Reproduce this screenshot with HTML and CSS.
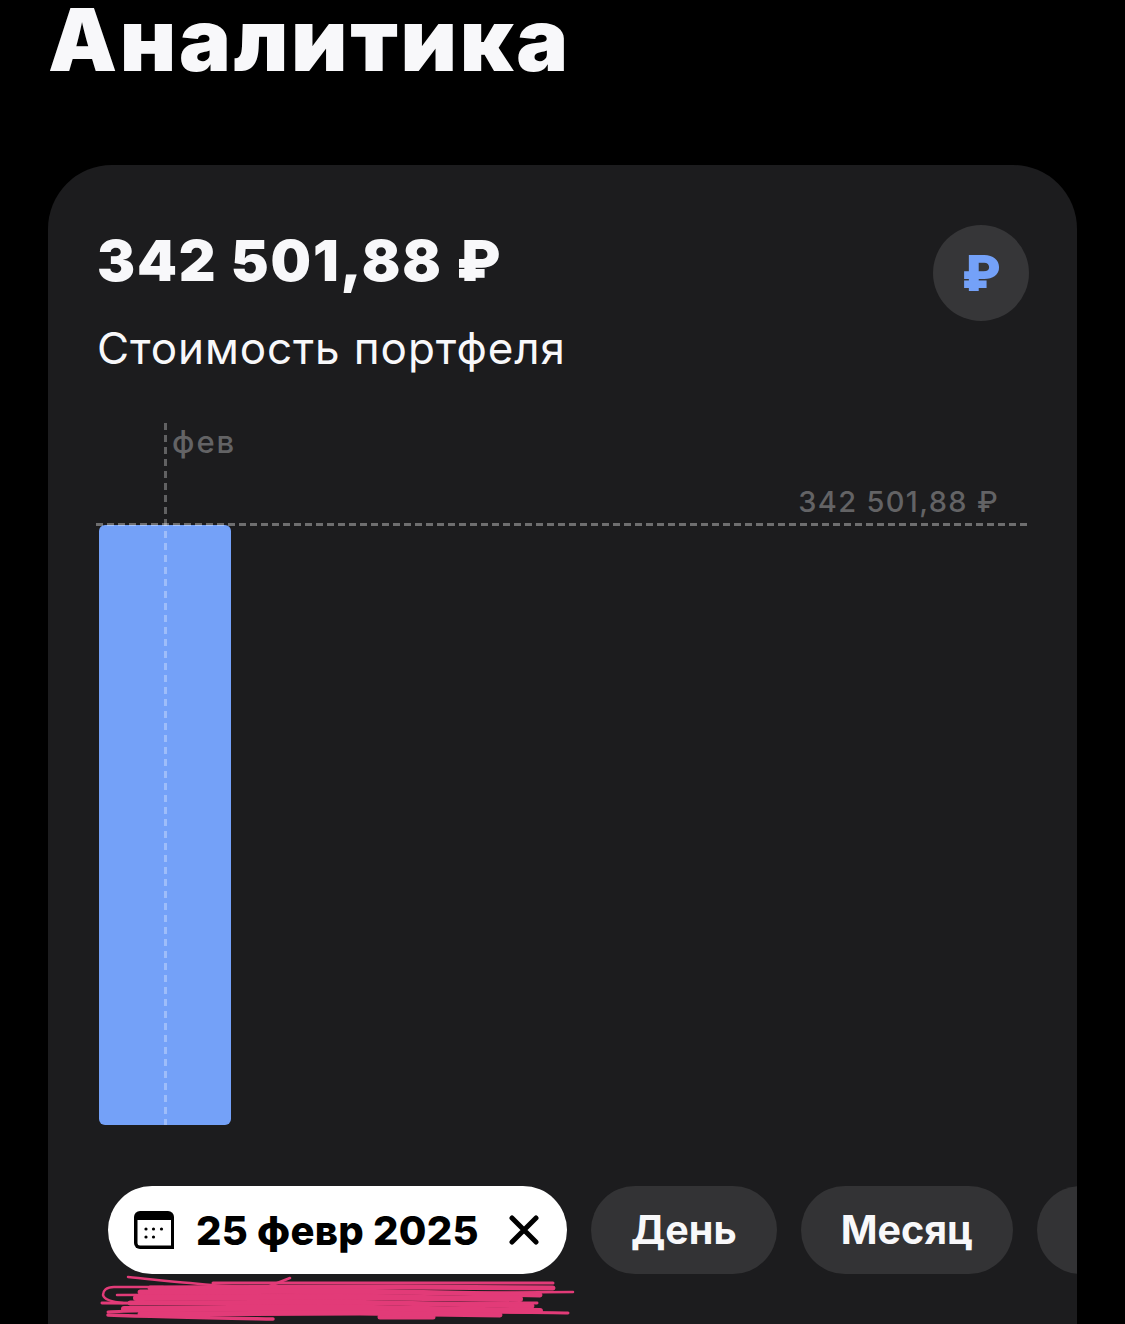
FILE: index.html
```html
<!DOCTYPE html>
<html lang="ru">
	<head>
		<meta charset="utf-8">
		<title>Аналитика</title>
		<link rel="stylesheet" href="styles.css">
	</head>

	<body>
		<h1 class="page-title">Аналитика</h1>

		<section class="card">
			<header class="summary">
				<div>
					<div class="summary-value">342 501,88 ₽</div>
					<div class="summary-label">Стоимость портфеля</div>
				</div>
				<div class="currency-badge">₽</div>
			</header>

			<div class="chart">
				<div class="chart-bar"></div>
				<div class="chart-month-line"></div>
				<span class="chart-month">фев</span>
				<span class="chart-max">342 501,88 ₽</span>
				<div class="chart-max-line"></div>
			</div>

			<div class="filters">
				<button class="chip chip-active">
					<svg class="chip-calendar" viewBox="0 0 40 38" width="40" height="38">
						<path d="M6 0H34a6 6 0 0 1 6 6V38H6a6 6 0 0 1-6-6V6a6 6 0 0 1 6-6Z" fill="#000"/>
						<path d="M3.500 9H37V34.500H6a2.500 2.500 0 0 1-2.500-2.500Z" fill="#fff"/>
						<g fill="#000">
							<circle cx="12" cy="18" r="1.600"/>
							<circle cx="19.500" cy="18" r="1.600"/>
							<circle cx="27.500" cy="18" r="1.600"/>
							<circle cx="12" cy="26" r="1.600"/>
							<circle cx="19.500" cy="26" r="1.600"/>
						</g>
					</svg>
					<span>25 февр 2025</span>
					<svg class="chip-close" viewBox="0 0 30 30" width="30" height="30">
						<path d="M3 3L27 27M27 3L3 27" stroke="#000" stroke-width="5" stroke-linecap="round" fill="none"/>
					</svg>
				</button>
				<button class="chip">День</button>
				<button class="chip">Месяц</button>
				<button class="chip chip-clipped"></button>
			</div>

			<svg class="scribble" viewBox="0 0 480 50" width="480" height="50">
				<g fill="none" stroke="#e23b78" stroke-linecap="round" stroke-linejoin="round">
					<path stroke-width="2.500" d="M28 3C50 5 70 8 90 9C115 12 140 13 167 13L190 4"/>
					<path stroke-width="2.500" d="M63 13H14C6 13 3 17 3 21C4 25 12 28 23 29"/>
					<path stroke-width="2.500" d="M17 21L250 20L473 18"/>
					<path stroke-width="3" d="M2 29L200 30L437 29"/>
					<path stroke-width="3" d="M8 38C60 34 300 37 468 39"/>
					<path stroke-width="3.500" d="M8 41C60 43 120 44 173 45"/>
					<path stroke-width="3" d="M113 9H453"/>
					<path stroke-width="5" d="M280 43H333"/>
					<path stroke-width="5" d="M50 14L300 13L453 14"/>
					<path stroke-width="5" d="M40 18L250 17L440 21"/>
					<path stroke-width="6" d="M36 24L240 23L420 25"/>
					<path stroke-width="5" d="M30 29L240 28L432 32"/>
					<path stroke-width="6" d="M24 35L220 33L440 37"/>
					<path stroke-width="5" d="M40 40L260 39L400 41"/>
				</g>
			</svg>
		</section>
	</body>
</html>
```

FILE: styles.css
```css
* {
	box-sizing: border-box;
}

html, body {
	height: 1324px;
	overflow: hidden;
}

body {
	margin: 0;
	padding-left: 48px;
	background-color: #000;
	color: #f8f8fa;
	font-family: "Inter", "Liberation Sans", sans-serif;
}

.page-title {
	margin: 0;
	height: 165px;
	font-size: 87px;
	font-weight: 900;
	line-height: 80px;
	letter-spacing: 2.7px;
}

.card {
	width: 1029px;
	height: 1159px;
	padding: 60px 48px 0 49px;
	overflow: hidden;
	border-radius: 64px 64px 0 0;
	background-color: #1c1c1e;
}

.summary {
	display: flex;
	justify-content: space-between;
	align-items: flex-start;
}

.summary-value {
	margin-top: 2px;
	font-size: 57px;
	font-weight: 900;
	line-height: 68px;
	letter-spacing: 1.85px;
}

.summary-label {
	margin-top: 28px;
	font-size: 44px;
	font-weight: 400;
	line-height: 50px;
	letter-spacing: 0.9px;
}

.currency-badge {
	display: flex;
	justify-content: center;
	align-items: center;
	width: 96px;
	height: 96px;
	border-radius: 50%;
	background-color: #363638;
	color: #74a1f8;
	font-size: 50px;
	font-weight: 900;
}

/* free canvas: lines and labels are placed over the bar */
.chart {
	position: relative;
	height: 704px;
	margin-top: 48px;
}

.chart-month-line {
	position: absolute;
	left: 67px;
	top: 2px;
	width: 3px;
	height: 702px;
	background-image: repeating-linear-gradient(to bottom, rgba(255, 255, 255, 0.3) 0 7px, transparent 7px 12px);
}

.chart-month {
	position: absolute;
	left: 75px;
	top: 3px;
	color: #636365;
	font-size: 31px;
	font-weight: 500;
	line-height: 36px;
	letter-spacing: 2px;
}

.chart-max {
	position: absolute;
	right: 30px;
	top: 63px;
	color: #636365;
	font-size: 29px;
	font-weight: 500;
	line-height: 36px;
	letter-spacing: 1.35px;
}

.chart-max-line {
	position: absolute;
	left: -1px;
	right: 2px;
	top: 102px;
	height: 3px;
	background-image: repeating-linear-gradient(to right, rgba(255, 255, 255, 0.36) 0 7px, transparent 7px 11px);
}

.chart-bar {
	position: absolute;
	left: 2px;
	top: 104px;
	width: 132px;
	height: 600px;
	border-radius: 6px;
	background-color: #74a1f8;
}

.filters {
	display: flex;
	gap: 24px;
	margin-top: 61px;
	margin-left: 11px;
	white-space: nowrap;
}

.chip {
	flex-shrink: 0;
	display: flex;
	align-items: center;
	height: 88px;
	padding: 0 40px;
	border: 0;
	border-radius: 44px;
	background-color: #333335;
	color: #f8f8fa;
	font-family: inherit;
	font-size: 39.5px;
	font-weight: 700;
}

.chip-active {
	width: 459px;
	padding: 0 28px 0 26px;
	gap: 22px;
	background-color: #fff;
	color: #000;
	font-size: 40px;
	font-weight: 800;
	letter-spacing: 0.25px;
}

.chip-clipped {
	width: 100px;
}

.chip-calendar, .chip-close {
	flex-shrink: 0;
}

.chip-close {
	margin-left: auto;
}

.scribble {
	display: block;
	margin-left: 3px;
	overflow: visible;
}
```
